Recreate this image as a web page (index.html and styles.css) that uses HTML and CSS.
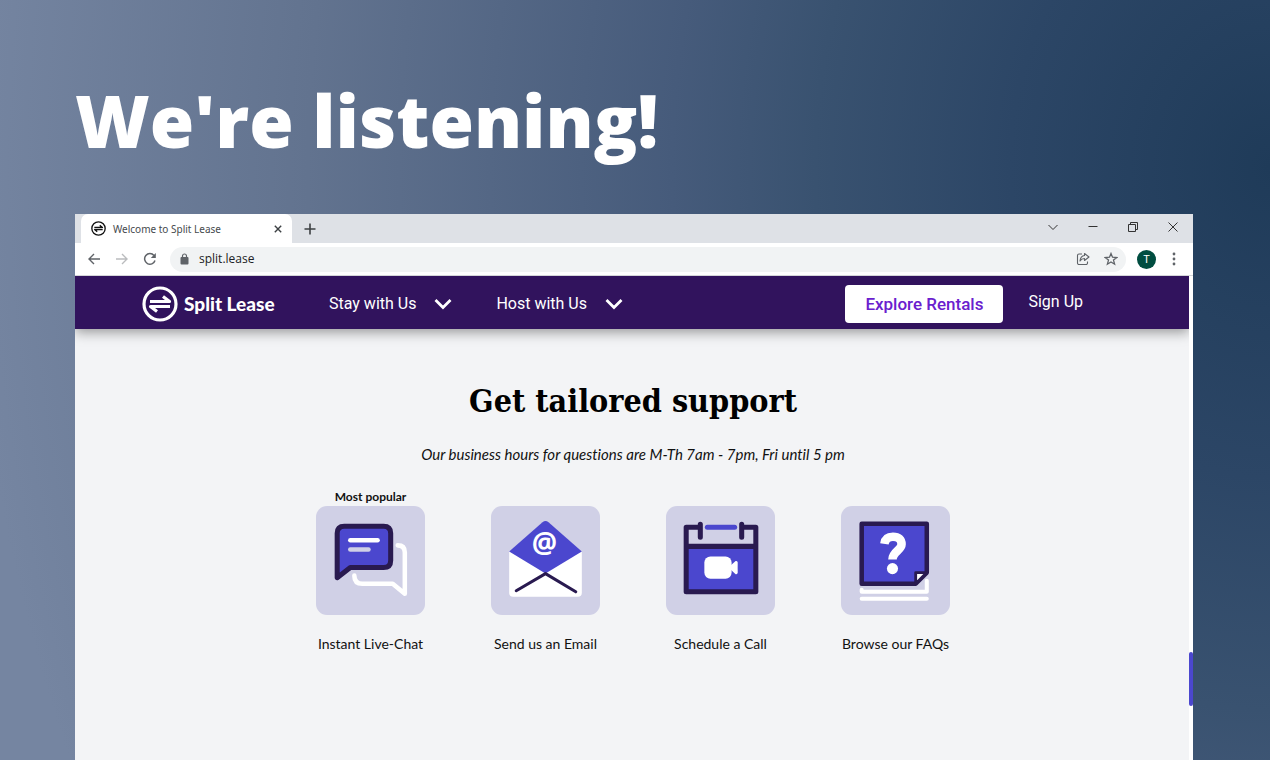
FILE: index.html
```html
<!DOCTYPE html>
<html lang="en">
<head>
<meta charset="utf-8">
<title>We're listening!</title>
<link rel="stylesheet" href="styles.css">
</head>
<body>
<svg class="sprite" aria-hidden="true">
  <symbol id="swap" viewBox="0 0 36 36">
    <circle cx="18" cy="18" r="16" fill="none" stroke="currentColor" stroke-width="3.200"/>
    <path d="M8 15.500H27.500L21 10.500M28 20.500H8.500L15 25.500" fill="none" stroke="currentColor" stroke-width="3.200" stroke-linejoin="round"/>
  </symbol>
  <symbol id="chevron" viewBox="0 0 18 12">
    <path d="M1.500 2L9 9.500L16.500 2" fill="none" stroke="currentColor" stroke-width="2.800"/>
  </symbol>
</svg>
<main class="slide">
  <h1 class="headline">We're listening!</h1>
  <section class="browser">
    <div class="tabstrip">
      <div class="tab">
        <svg class="favicon"><use href="#swap"/></svg>
        <span class="tab-title">Welcome to Split Lease</span>
        <button class="icon-button" aria-label="Close tab"><svg width="8" height="8" viewBox="0 0 8 8"><path d="M.8.8L7.200 7.200M7.200.8L.8 7.200" stroke="#3c4043" stroke-width="1.400"/></svg></button>
      </div>
      <button class="icon-button new-tab" aria-label="New tab"><svg width="12" height="12" viewBox="0 0 12 12"><path d="M6 .5V11.500M.5 6H11.500" stroke="#3c4043" stroke-width="1.600"/></svg></button>
      <div class="window-controls">
        <button class="icon-button" aria-label="Search tabs"><svg width="12" height="12" viewBox="0 0 12 12" fill="none" stroke="#333"><path d="M1.500 4L6 8.500L10.500 4"/></svg></button>
        <button class="icon-button" aria-label="Minimize"><svg width="12" height="12" viewBox="0 0 12 12" stroke="#333"><path d="M1.500 5.500H10.500"/></svg></button>
        <button class="icon-button" aria-label="Restore"><svg width="12" height="12" viewBox="0 0 12 12" fill="none" stroke="#333"><path d="M1.500 3.500H8.500V10.500H1.500ZM3.500 3.500V1.500H10.500V8.500H8.500"/></svg></button>
        <button class="icon-button" aria-label="Close window"><svg width="12" height="12" viewBox="0 0 12 12" stroke="#333"><path d="M1.500 1.500L10.500 10.500M10.500 1.500L1.500 10.500"/></svg></button>
      </div>
    </div>
    <div class="toolbar">
      <button class="icon-button" aria-label="Back"><svg width="14" height="14" viewBox="0 0 14 14" fill="none" stroke="#5f6368" stroke-width="1.400"><path d="M13 7H2M7 2L2 7L7 12"/></svg></button>
      <button class="icon-button" aria-label="Forward"><svg width="14" height="14" viewBox="0 0 14 14" fill="none" stroke="#babcbe" stroke-width="1.400"><path d="M1 7H12M7 2L12 7L7 12"/></svg></button>
      <button class="icon-button" aria-label="Reload"><svg width="14" height="14" viewBox="0 0 14 14" fill="none" stroke="#5f6368" stroke-width="1.500"><path d="M12 8.500A5.300 5.300 0 1 1 11 3.500"/><path d="M12.800 1V6H7.800Z" fill="#5f6368" stroke="none"/></svg></button>
      <label class="omnibox">
        <svg width="9" height="12" viewBox="0 0 9 12"><rect x="0.500" y="4" width="8" height="7.500" rx="1" fill="#5f6368"/><path d="M2.500 4.500V3A2 2 0 0 1 6.500 3V4.500" fill="none" stroke="#5f6368" stroke-width="1.200"/></svg>
        <input class="address" type="text" value="split.lease" aria-label="Address">
        <svg width="14" height="14" viewBox="0 0 14 14" fill="none" stroke="#5f6368" stroke-width="1.100" stroke-linejoin="round"><path d="M6 2H3A1.500 1.500 0 0 0 1.500 3.500V11A1.500 1.500 0 0 0 3 12.500H10A1.500 1.500 0 0 0 11.500 11V9.500"/><path d="M8.500 1.500L13 5L8.500 8.500V6.500Q5.500 6.500 4 9Q4.500 4 8.500 3.500Z"/></svg>
        <svg width="14" height="14" viewBox="0 0 14 14" fill="none" stroke="#5f6368" stroke-width="1.300"><path d="M7 1.500L8.500 5.200L12.800 5.500L9.500 8.100L10.600 12.200L7 10L3.400 12.200L4.500 8.100L1.200 5.500L5.500 5.200Z"/></svg>
      </label>
      <button class="avatar" aria-label="Profile">T</button>
      <button class="icon-button" aria-label="Menu"><svg width="4" height="14" viewBox="0 0 4 14" fill="#5f6368"><circle cx="2" cy="2" r="1.400"/><circle cx="2" cy="7" r="1.400"/><circle cx="2" cy="12" r="1.400"/></svg></button>
    </div>
    <div class="viewport">
      <div class="page">
        <nav class="nav">
          <a class="brand" href="#"><svg class="brand-mark"><use href="#swap"/></svg>Split Lease</a>
          <button class="nav-menu">Stay with Us<svg class="chevron"><use href="#chevron"/></svg></button>
          <button class="nav-menu">Host with Us<svg class="chevron"><use href="#chevron"/></svg></button>
          <a class="explore" href="#">Explore Rentals</a>
          <a class="sign-up" href="#">Sign Up</a>
        </nav>
        <section class="support">
          <h2 class="support-title">Get tailored support</h2>
          <p class="hours">Our business hours for questions are M-Th 7am - 7pm, Fri until 5 pm</p>
          <div class="options">
            <a class="option" href="#">
              <span class="badge">Most popular</span>
              <svg class="tile" viewBox="0 0 108 108">
                <path d="M81 39Q88 39 88 46V87L76 77H46Q38 77 38 69" fill="none" stroke="#fff" stroke-width="4.500" stroke-linecap="round" stroke-linejoin="round"/>
                <path d="M21 71V27Q21 20 28 20H67Q74 20 74 27V54Q74 61 67 61H34Z" fill="#4b47ce" stroke="#291a50" stroke-width="5" stroke-linejoin="round"/>
                <path d="M34 34H61" stroke="#fff" stroke-width="4.500" stroke-linecap="round"/>
                <path d="M34 43H52" stroke="#d0d0e6" stroke-width="4.500" stroke-linecap="round"/>
              </svg>
              Instant Live-Chat
            </a>
            <a class="option" href="#">
              <svg class="tile" viewBox="0 0 108 108">
                <path d="M18 45H90V86Q90 90 86 90H22Q18 90 18 86Z" fill="#fff"/>
                <path d="M18 45L51 16Q54 13.500 57 16L90 45L54 67Z" fill="#4b47ce"/>
                <path d="M25 84L54 67L84 85" fill="none" stroke="#291a50" stroke-width="3" stroke-linecap="round" stroke-linejoin="round"/>
                <text class="glyph-at" x="53" y="47">@</text>
              </svg>
              Send us an Email
            </a>
            <a class="option" href="#">
              <svg class="tile" viewBox="0 0 108 108">
                <path d="M20 40H89V85H20Z" fill="#4b47ce"/>
                <path d="M34 21H20V85H89V21H75M20 40H89M34 18V31M75 18V31" fill="none" stroke="#291a50" stroke-width="5" stroke-linecap="round" stroke-linejoin="round"/>
                <path d="M41 21H68" stroke="#4b47ce" stroke-width="5" stroke-linecap="round"/>
                <rect x="38" y="50" width="27" height="22" rx="6" fill="#fff"/>
                <path d="M64 59L69 54.500Q71 54 71 56V66Q71 68 69 67.500L64 63Z" fill="#fff"/>
              </svg>
              Schedule a Call
            </a>
            <a class="option" href="#">
              <svg class="tile" viewBox="0 0 108 108">
                <path d="M20.500 83V85H85V74M20.500 92H85" fill="none" stroke="#fff" stroke-width="4" stroke-linecap="round" stroke-linejoin="round"/>
                <path d="M20.500 17.500H85V66L74 77H20.500Z" fill="#4b47ce" stroke="#291a50" stroke-width="4.500" stroke-linejoin="round"/>
                <path d="M85 66H74V77Z" fill="#fff" stroke="#291a50" stroke-width="2.800" stroke-linejoin="round"/>
                <path d="M43 37.500Q44 30.500 51.500 30.500Q60 30.500 60 38C60 44 51 45 51 53" fill="none" stroke="#fff" stroke-width="8.500"/>
                <circle cx="51" cy="62" r="5.500" fill="#fff"/>
              </svg>
              Browse our FAQs
            </a>
          </div>
        </section>
      </div>
      <div class="scrollbar"><div class="thumb"></div></div>
    </div>
  </section>
</main>
</body>
</html>
```
FILE: styles.css
```css
* {
  box-sizing: border-box;
}

body {
  margin: 0;
  font-family: Lato, sans-serif;
  font-variant-ligatures: none;
  color: #111;
}

a {
  color: inherit;
  text-decoration: none;
}

button {
  padding: 0;
  border: 0;
  background: none;
  font: inherit;
  color: inherit;
}

svg {
  display: block;
  flex: none;
}

.sprite {
  display: none;
}

.slide {
  display: flex;
  flex-direction: column;
  height: 100vh;
  overflow: hidden;
  padding: 70px 77px 0 75px;
  background: radial-gradient(ellipse 1300px 1550px at 100% 22%, #1f3b59 0%, #2c4666 20%, #395270 35%, #465b7b 46%, #62738f 74%, #7585a1 100%);
}

.headline {
  margin: 0 0 44px;
  font: 800 72px/100px "Open Sans", sans-serif;
  color: #fff;
}

.browser {
  display: flex;
  flex: 1;
  flex-direction: column;
  min-height: 0;
  background: #fff;
}

.icon-button {
  display: flex;
  align-items: center;
  justify-content: center;
}

.tabstrip {
  display: flex;
  height: 29px;
  padding-left: 6px;
  background: #dee1e6;
}

.tab {
  display: flex;
  align-items: center;
  gap: 7px;
  width: 211px;
  padding: 0 10px;
  border-radius: 7px 7px 0 0;
  background: #fff;
}

.favicon {
  width: 15px;
  height: 15px;
  color: #111;
}

.tab-title {
  flex: 1;
  font: 10px/16px "Noto Sans", sans-serif;
  color: #45494d;
}

.new-tab {
  margin-left: 12px;
}

.window-controls {
  display: flex;
  gap: 28px;
  height: 26px;
  margin-left: auto;
  padding-right: 14px;
}

.toolbar {
  display: flex;
  align-items: center;
  gap: 14px;
  height: 33px;
  padding: 0 17px 0 12px;
  border-bottom: 1px solid #d5d6d9;
}

.omnibox {
  display: flex;
  flex: 1;
  align-items: center;
  gap: 14px;
  height: 25px;
  margin: 0 -3px 0 -1px;
  padding: 0 8px 0 10px;
  border-radius: 13px;
  background: #f1f3f4;
}

.address {
  flex: 1;
  min-width: 0;
  margin-left: -4px;
  padding: 0;
  border: 0;
  background: none;
  font: 12px/16px "Open Sans", sans-serif;
  color: #202124;
}

.avatar {
  width: 19px;
  height: 19px;
  margin-right: 2px;
  border-radius: 50%;
  background: #004d40;
  font: 11px/19px Roboto, sans-serif;
  color: #fff;
}

.viewport {
  display: flex;
  flex: 1;
  min-height: 0;
}

.page {
  flex: 1;
  background: #f3f4f6;
}

.nav {
  display: flex;
  align-items: center;
  height: 53px;
  padding: 2px 106px 0 67px;
  background: #31135d;
  box-shadow: 0 3px 12px rgba(0, 0, 0, 0.4);
  clip-path: inset(0 0 -20px 0);
  font: 16px/24px Roboto, sans-serif;
  color: #fff;
}

.brand {
  display: flex;
  align-items: center;
  gap: 6px;
  width: 187px;
  font: 900 19px/24px Lato, sans-serif;
}

.brand-mark {
  width: 36px;
  height: 36px;
}

.nav-menu {
  display: flex;
  align-items: center;
  gap: 18px;
  margin-right: 44px;
}

.chevron {
  width: 18px;
  height: 12px;
}

.explore {
  margin-left: auto;
  padding: 7px 20px;
  border-radius: 4px;
  background: #fff;
  font-size: 17px;
  font-weight: 500;
  color: #6a20ce;
}

.sign-up {
  margin-left: 25px;
  padding-bottom: 4px;
}

.support {
  display: flex;
  flex-direction: column;
  align-items: center;
  padding: 48px 0 0 2px;
}

.support-title {
  margin: 0 0 19px;
  font: 700 32px/48px "DejaVu Serif Condensed", "DejaVu Serif", serif;
  color: #000;
}

.hours {
  margin: 0 0 33px;
  font-size: 15px;
  line-height: 20px;
  font-style: italic;
}

.options {
  display: flex;
  gap: 66px;
}

.option {
  position: relative;
  display: flex;
  flex-direction: column;
  align-items: center;
  gap: 19px;
  width: 109px;
  padding-top: 9px;
  font-size: 14px;
  line-height: 20px;
  white-space: nowrap;
}

.badge {
  position: absolute;
  top: -10px;
  font-size: 12px;
  font-weight: 700;
}

.tile {
  width: 109px;
  height: 109px;
  border-radius: 11px;
  background: #d0d0e6;
}

.glyph-at {
  font: 700 28px "Open Sans", sans-serif;
  text-anchor: middle;
  fill: #fff;
}

.scrollbar {
  display: flex;
  flex-direction: column;
  width: 4px;
  padding-top: 376px;
  background: #fff;
}

.thumb {
  height: 54px;
  border-radius: 2px;
  background: #4b47ce;
}
```
